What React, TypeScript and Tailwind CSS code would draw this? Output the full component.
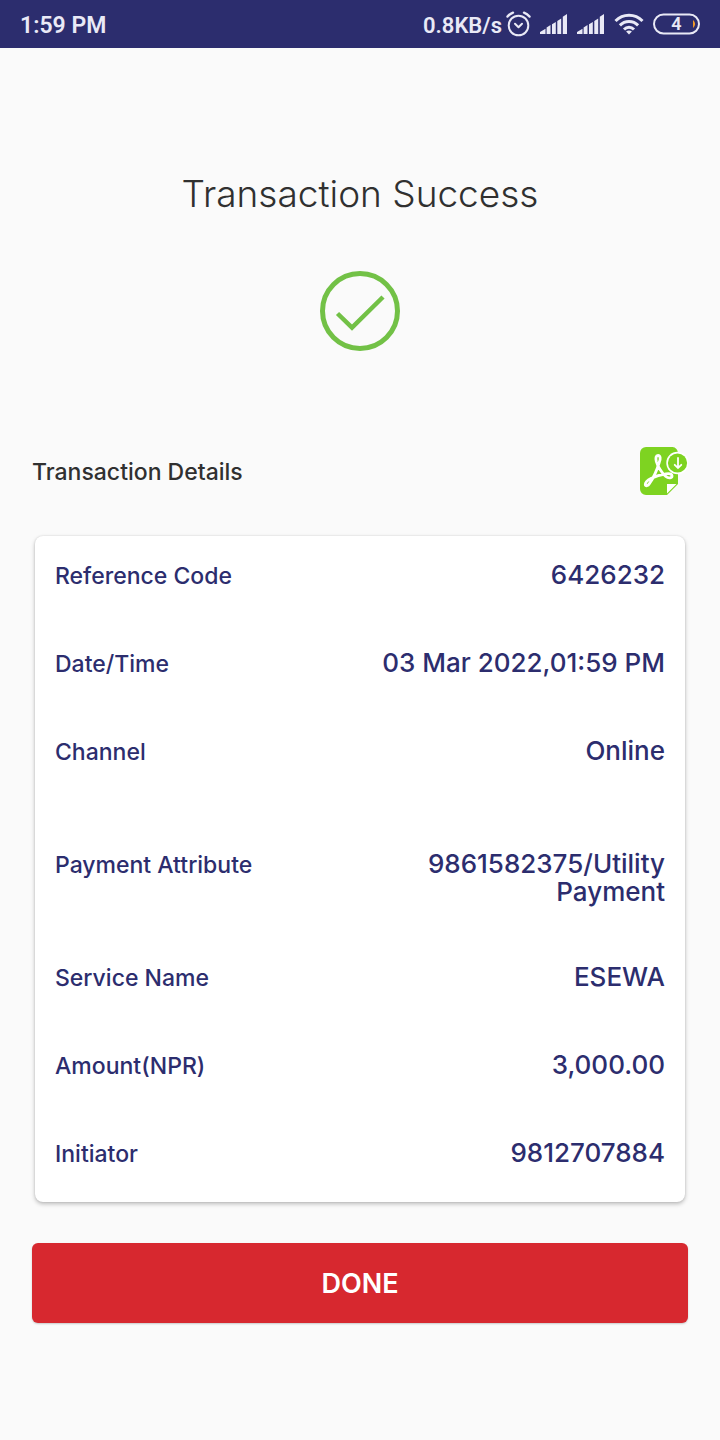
import React from "react";

type Detail = { label: string; value: string; tall?: boolean };

const details: Detail[] = [
  { label: "Reference Code", value: "6426232" },
  { label: "Date/Time", value: "03 Mar 2022,01:59 PM" },
  { label: "Channel", value: "Online" },
  { label: "Payment Attribute", value: "9861582375/Utility Payment", tall: true },
  { label: "Service Name", value: "ESEWA" },
  { label: "Amount(NPR)", value: "3,000.00" },
  { label: "Initiator", value: "9812707884" },
];

function AlarmIcon() {
  return (
    <svg width="25" height="26" viewBox="0 0 25 26" fill="none" stroke="currentColor" strokeWidth="2" strokeLinecap="round" aria-hidden="true">
      <circle cx="12.5" cy="14.5" r="9.8" />
      <path d="M1.5 5.6C3 3.8 4.8 2.5 7 1.7M23.5 5.6C22 3.8 20.2 2.5 18 1.7" strokeWidth="2.4" />
      <path d="M9 12.8l3.5 3.5 3.5-3.5" strokeLinejoin="round" />
    </svg>
  );
}

function SignalIcon() {
  return (
    <svg width="28" height="20" viewBox="0 0 28 20" fill="currentColor" aria-hidden="true">
      <path d="M0 20v-2l5.500-3.200V20zM6.600 20v-6.600l3.900-2.300V20zM12 20v-9.700L15.800 8v12zM17.300 20V7l3.900-2.500V20zM22.800 20V2.800L27 0v20z" />
    </svg>
  );
}

function WifiIcon() {
  return (
    <svg width="30" height="22" viewBox="0 0 30 22" fill="none" stroke="currentColor" strokeWidth="3" aria-hidden="true">
      <path d="M1.5 8C9 0.3 21 0.3 28.5 8" />
      <path d="M5.900 12.400C11 7.200 19 7.200 24.100 12.400" />
      <path d="M10 16.500C12.800 13.600 17.200 13.600 20 16.500" />
      <path d="M15 21.500l-2.900-3c1.700-1.500 4.100-1.500 5.800 0z" fill="currentColor" stroke="none" />
    </svg>
  );
}

function BatteryIcon() {
  return (
    <svg width="47" height="22" viewBox="0 0 47 22" aria-hidden="true">
      <rect x="1" y="1.5" width="45" height="19" rx="9.500" fill="none" stroke="currentColor" strokeWidth="2" />
      <path d="M40 7c2.800 2.500 2.800 5.500 0 8z" fill="#f09a2a" />
    </svg>
  );
}

function SuccessIcon() {
  return (
    <svg width="80" height="80" viewBox="0 0 80 80" fill="none" stroke="#72c146" strokeWidth="5" role="img" aria-label="Success">
      <circle cx="40" cy="40" r="37.5" />
      <path d="M17.5 42.5L32 56.7 63 26" strokeWidth="4.5" />
    </svg>
  );
}

function PdfDownloadIcon() {
  return (
    <svg width="48" height="48" viewBox="0 0 48 48" aria-hidden="true">
      <path d="M6 0h26.5a6 6 0 0 1 5.5 6v31L27 48H6a6 6 0 0 1-6-6V6a6 6 0 0 1 6-6z" fill="#7ed321" />
      <path d="M27 46.500V37h9.500z" fill="#fff" />
      <path
        d="M18 8.500c2.500 0 2.800 3.800 1.200 7C17 23 13 31.500 9.500 36.500 8 39 5.500 39.500 5.300 37.500 5 33.500 15 28.500 26 26.800c3-.5 5.700.2 6 1.900.3 2.200-3.300 3.200-6.200.8C22 26.500 17.500 19 16.300 14.500c-.8-3.500-.4-6 1.700-6z"
        fill="none"
        stroke="#fff"
        strokeWidth="2.800"
        strokeLinejoin="round"
      />
      <circle cx="37.500" cy="16" r="11.200" fill="#fff" />
      <circle cx="37.500" cy="16" r="9.600" fill="#7ed321" />
      <path d="M38 11v10M34.700 17.800L38 21l3.300-3.200" fill="none" stroke="#fff" strokeWidth="1.800" strokeLinecap="round" />
    </svg>
  );
}

export default function App() {
  return (
    <div className="min-h-screen bg-[#fafafa] font-['Inter',sans-serif]">
      <header className="flex h-12 items-center justify-between bg-[#2c2d6e] pl-5 pr-5 font-['Roboto',sans-serif] font-semibold leading-7 text-[#e9e9f6]">
        <span className="pt-[3px] text-[23px]">1:59 PM</span>
        <div className="flex items-center gap-[9px]">
          <div className="flex items-center gap-1">
            <span className="pt-[3px] text-[22px]">0.8KB/s</span>
            <AlarmIcon />
          </div>
          <SignalIcon />
          <SignalIcon />
          <WifiIcon />
          <div className="relative">
            <BatteryIcon />
            <span className="absolute inset-0 flex items-center justify-center text-[18px]">4</span>
          </div>
        </div>
      </header>

      <main className="px-8 pb-12">
        <section className="flex flex-col items-center pt-[122px]">
          <h1 className="text-[37px] font-light leading-[48px] text-[#303030]">Transaction Success</h1>
          <div className="mt-[53px]">
            <SuccessIcon />
          </div>
        </section>

        <section className="mt-24">
          <div className="flex items-center justify-between">
            <h2 className="pt-0.5 text-[23px] font-medium leading-7 text-[#303030]">Transaction Details</h2>
            <button type="button" aria-label="Download PDF">
              <PdfDownloadIcon />
            </button>
          </div>

          <dl className="mx-[3px] mt-[41px] rounded-lg bg-white px-5 pt-[25px] text-[#2c2d6e] shadow-[0_2px_4px_rgba(0,0,0,0.25),0_0_2px_rgba(0,0,0,0.12)]">
            {details.map((item) => (
              <div
                key={item.label}
                className={
                  item.tall
                    ? "flex min-h-[138px] items-start justify-between gap-4 pt-[25px]"
                    : "flex min-h-[88px] items-start justify-between gap-4 last:min-h-[63px]"
                }
              >
                <dt className="pt-px text-[23px] font-medium leading-7">{item.label}</dt>
                <dd className="max-w-[300px] text-right text-[26px] font-medium leading-7">{item.value}</dd>
              </div>
            ))}
          </dl>
        </section>

        <button
          type="button"
          className="mt-[41px] h-20 w-full rounded-md bg-[#d7282f] pt-0.5 text-[27px] font-semibold text-white shadow-[0_1px_2px_rgba(0,0,0,0.2)]"
        >
          DONE
        </button>
      </main>
    </div>
  );
}
